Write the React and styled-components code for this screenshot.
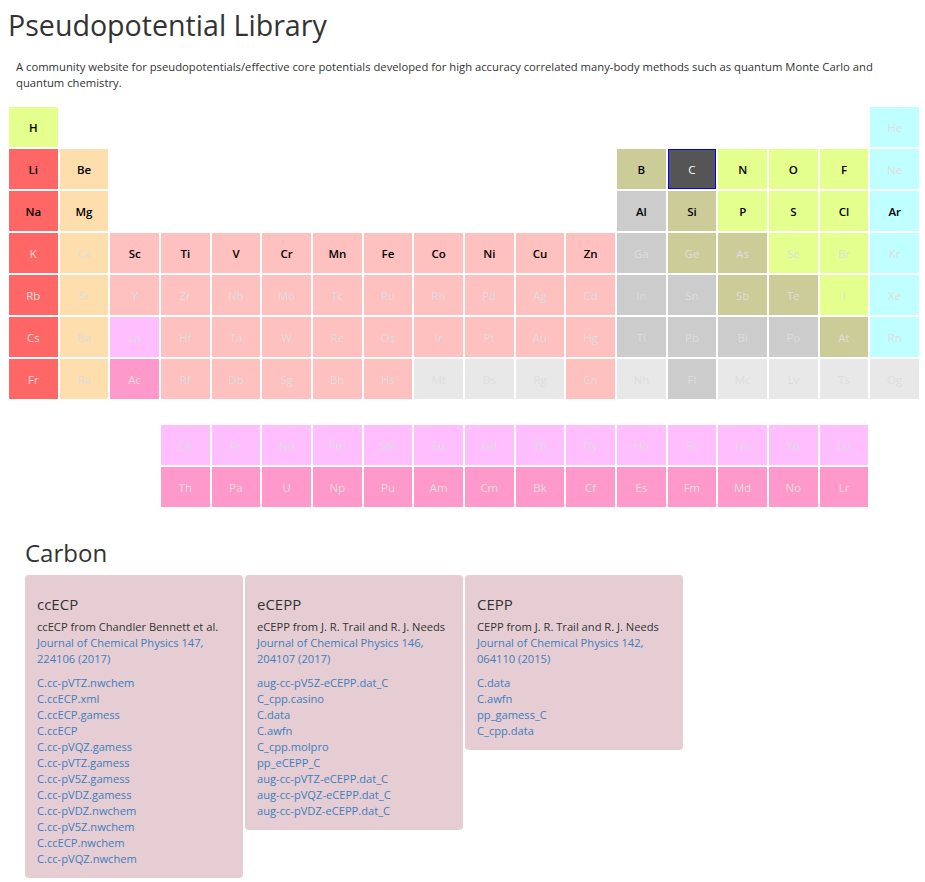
import React from "react";
import styled, { createGlobalStyle } from "styled-components";

const Global = createGlobalStyle`
  html, body { margin: 0; padding: 0; background: #fff; }
  body { font-family: "Open Sans", "Liberation Sans", sans-serif; color: #333; }
`;

const COLORS = {
  alkali: "#ff6666",
  earth: "#ffdead",
  trans: "#ffc0c0",
  lanth: "#ffbfff",
  act: "#ff99cc",
  metalloid: "#cccc99",
  post: "#cccccc",
  nonmetal: "#e5ff8f",
  noble: "#c0ffff",
  unknown: "#e8e8e8",
};

const A = true;
// [symbol, type, available]
const rows = [
  [["H", "nonmetal", A], ...Array(16).fill(null), ["He", "noble"]],
  [["Li", "alkali", A], ["Be", "earth", A], ...Array(10).fill(null), ["B", "metalloid", A], ["C", "selected", A], ["N", "nonmetal", A], ["O", "nonmetal", A], ["F", "nonmetal", A], ["Ne", "noble"]],
  [["Na", "alkali", A], ["Mg", "earth", A], ...Array(10).fill(null), ["Al", "post", A], ["Si", "metalloid", A], ["P", "nonmetal", A], ["S", "nonmetal", A], ["Cl", "nonmetal", A], ["Ar", "noble", A]],
  [["K", "alkali"], ["Ca", "earth"], ["Sc", "trans", A], ["Ti", "trans", A], ["V", "trans", A], ["Cr", "trans", A], ["Mn", "trans", A], ["Fe", "trans", A], ["Co", "trans", A], ["Ni", "trans", A], ["Cu", "trans", A], ["Zn", "trans", A], ["Ga", "post"], ["Ge", "metalloid"], ["As", "metalloid"], ["Se", "nonmetal"], ["Br", "nonmetal"], ["Kr", "noble"]],
  [["Rb", "alkali"], ["Sr", "earth"], ["Y", "trans"], ["Zr", "trans"], ["Nb", "trans"], ["Mo", "trans"], ["Tc", "trans"], ["Ru", "trans"], ["Rh", "trans"], ["Pd", "trans"], ["Ag", "trans"], ["Cd", "trans"], ["In", "post"], ["Sn", "post"], ["Sb", "metalloid"], ["Te", "metalloid"], ["I", "nonmetal"], ["Xe", "noble"]],
  [["Cs", "alkali"], ["Ba", "earth"], ["La", "lanth"], ["Hf", "trans"], ["Ta", "trans"], ["W", "trans"], ["Re", "trans"], ["Os", "trans"], ["Ir", "trans"], ["Pt", "trans"], ["Au", "trans"], ["Hg", "trans"], ["Tl", "post"], ["Pb", "post"], ["Bi", "post"], ["Po", "post"], ["At", "metalloid"], ["Rn", "noble"]],
  [["Fr", "alkali"], ["Ra", "earth"], ["Ac", "act"], ["Rf", "trans"], ["Db", "trans"], ["Sg", "trans"], ["Bh", "trans"], ["Hs", "trans"], ["Mt", "unknown"], ["Ds", "unknown"], ["Rg", "unknown"], ["Cn", "trans"], ["Nh", "unknown"], ["Fl", "post"], ["Mc", "unknown"], ["Lv", "unknown"], ["Ts", "unknown"], ["Og", "unknown"]],
];

const fRows = [
  [null, null, null, ...["Ce", "Pr", "Nd", "Pm", "Sm", "Eu", "Gd", "Tb", "Dy", "Ho", "Er", "Tm", "Yb", "Lu"].map((s) => [s, "lanth"]), null],
  [null, null, null, ...["Th", "Pa", "U", "Np", "Pu", "Am", "Cm", "Bk", "Cf", "Es", "Fm", "Md", "No", "Lr"].map((s) => [s, "act"]), null],
];

const Page = styled.div`
  padding: 7px 6px 20px 8px;
`;

const Title = styled.h1`
  margin: 0;
  font-size: 28.6px;
  line-height: 36px;
  font-weight: 400;
  color: #333;
`;

const Lead = styled.p`
  margin: 16px 0 0 8px;
  font-size: 11.25px;
  line-height: 16px;
  color: #333;
`;

const Table = styled.div`
  display: grid;
  grid-template-columns: repeat(18, 1fr);
  grid-auto-rows: 40px;
  gap: 2px;
  width: 910px;
  margin: ${(p) => p.$mt}px 0 0 1px;
`;

const Cell = styled.div`
  display: flex;
  align-items: center;
  justify-content: center;
  box-sizing: border-box;
  background: ${(p) => (p.$type === "selected" ? "#555555" : COLORS[p.$type] || "transparent")};
  border: ${(p) => (p.$type === "selected" ? "1px solid #0000ff" : "none")};
  color: ${(p) => (p.$type === "selected" ? "#ffffff" : p.$avail ? "#000" : "#dddddd")};
  font-size: 11.5px;
  font-weight: ${(p) => (p.$avail && p.$type !== "selected" ? 600 : 400)};
  cursor: ${(p) => (p.$avail ? "pointer" : "default")};
`;

const Section = styled.section`
  margin: 31px 0 0 17px;
`;

const Heading = styled.h2`
  margin: 0;
  font-size: 24px;
  line-height: 30px;
  font-weight: 400;
  color: #333;
`;

const Cards = styled.div`
  display: flex;
  align-items: flex-start;
  gap: 2px;
  margin-top: 7px;
`;

const Card = styled.div`
  box-sizing: border-box;
  width: 218px;
  background: #e5cdd3;
  border-radius: 4px;
  padding: 18px 12px 11px;
  font-size: 11.15px;
  line-height: 16px;
`;

const CardTitle = styled.h3`
  margin: 0 0 4px;
  font-size: 15px;
  line-height: 22px;
  font-weight: 400;
  color: #333;
`;

const Text = styled.div`
  font-size: 11.15px;
  line-height: 16px;
  color: #333;
`;

const Link = styled.a`
  display: block;
  color: #3d7ebd;
  text-decoration: none;
  font-size: 11.15px;
  line-height: 16px;
`;

const Files = styled.div`
  margin-top: 8px;
  display: flex;
  flex-direction: column;
`;

const cards = [
  {
    name: "ccECP",
    desc: "ccECP from Chandler Bennett et al.",
    ref: "Journal of Chemical Physics 147, 224106 (2017)",
    files: ["C.cc-pVTZ.nwchem", "C.ccECP.xml", "C.ccECP.gamess", "C.ccECP", "C.cc-pVQZ.gamess", "C.cc-pVTZ.gamess", "C.cc-pV5Z.gamess", "C.cc-pVDZ.gamess", "C.cc-pVDZ.nwchem", "C.cc-pV5Z.nwchem", "C.ccECP.nwchem", "C.cc-pVQZ.nwchem"],
  },
  {
    name: "eCEPP",
    desc: "eCEPP from J. R. Trail and R. J. Needs",
    ref: "Journal of Chemical Physics 146, 204107 (2017)",
    files: ["aug-cc-pV5Z-eCEPP.dat_C", "C_cpp.casino", "C.data", "C.awfn", "C_cpp.molpro", "pp_eCEPP_C", "aug-cc-pVTZ-eCEPP.dat_C", "aug-cc-pVQZ-eCEPP.dat_C", "aug-cc-pVDZ-eCEPP.dat_C"],
  },
  {
    name: "CEPP",
    desc: "CEPP from J. R. Trail and R. J. Needs",
    ref: "Journal of Chemical Physics 142, 064110 (2015)",
    files: ["C.data", "C.awfn", "pp_gamess_C", "C_cpp.data"],
  },
];

const renderRow = (row, ri) =>
  row.map((el, ci) =>
    el ? (
      <Cell key={`${ri}-${ci}`} $type={el[1]} $avail={!!el[2]}>
        {el[0]}
      </Cell>
    ) : (
      <Cell key={`${ri}-${ci}`} />
    )
  );

export default function App() {
  return (
    <Page>
      <Global />
      <Title>Pseudopotential Library</Title>
      <Lead>
        A community website for pseudopotentials/effective core potentials developed for high accuracy correlated many-body methods such as quantum Monte Carlo and quantum chemistry.
      </Lead>
      <Table $mt={16}>{rows.map(renderRow)}</Table>
      <Table $mt={26}>{fRows.map(renderRow)}</Table>
      <Section>
        <Heading>Carbon</Heading>
        <Cards>
          {cards.map((c) => (
            <Card key={c.name}>
              <CardTitle>{c.name}</CardTitle>
              <Text>{c.desc}</Text>
              <Link href="#">{c.ref}</Link>
              <Files>
                {c.files.map((f) => (
                  <Link href="#" key={f}>
                    {f}
                  </Link>
                ))}
              </Files>
            </Card>
          ))}
        </Cards>
      </Section>
    </Page>
  );
}
